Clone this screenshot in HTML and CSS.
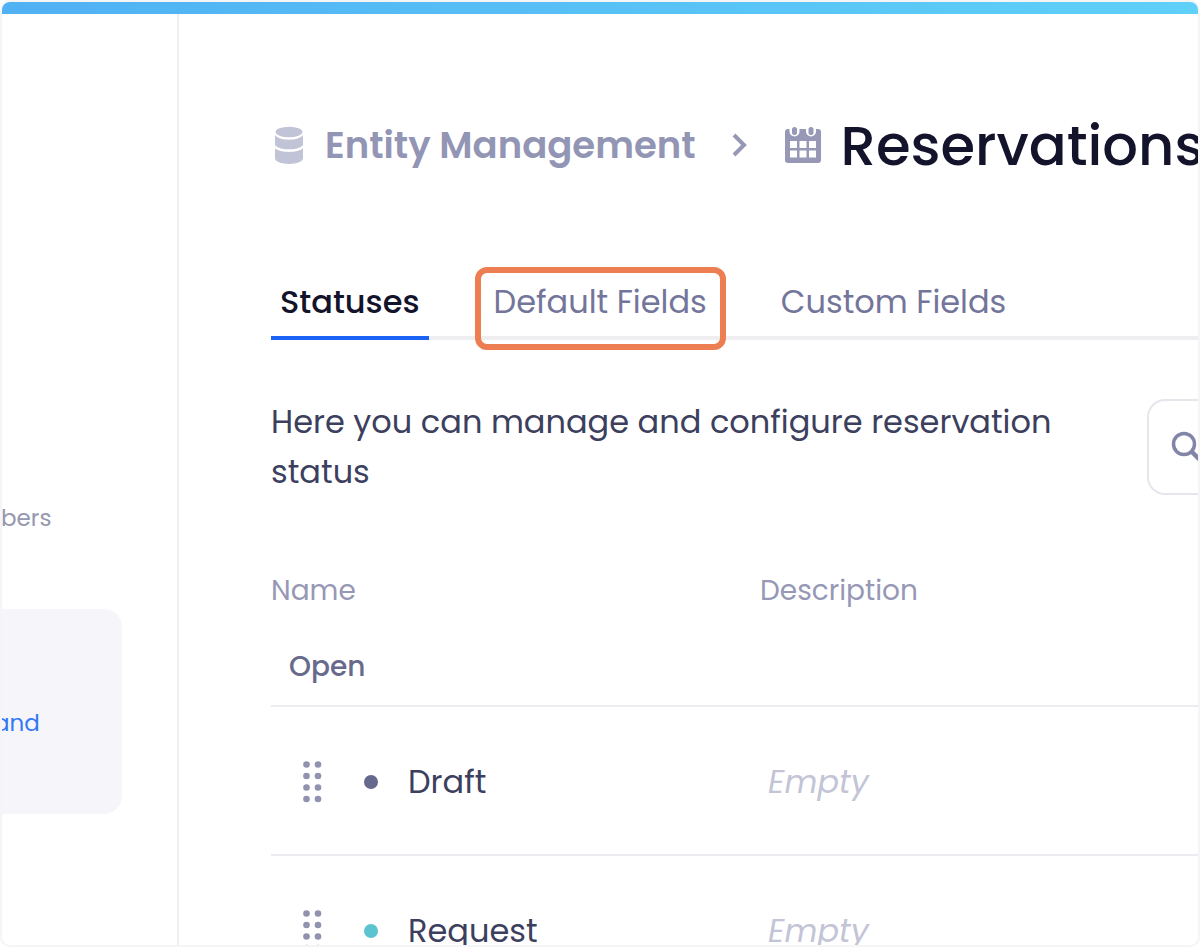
FILE: index.html
```html
<!DOCTYPE html>
<html lang="en">
<head>
  <meta charset="UTF-8">
  <title>Entity Management - Reservations</title>
  <meta name="viewport" content="width=device-width, initial-scale=1.0">
  <link rel="stylesheet" href="styles.css">
</head>
<body>

<div class="frame">
  <div class="top-bar"></div>

  <div class="layout">
    <aside class="sidebar">
      <a href="#" class="side-link">bers</a>
      <div class="side-card">
        <a href="#">and</a>
      </div>
    </aside>

    <main class="content">
      <header class="breadcrumb">
        <svg class="icon-db" width="30" height="38" viewBox="0 0 30 38" fill="#c1c3d6">
          <ellipse cx="15" cy="6" rx="13.5" ry="5.2"/>
          <path d="M1 9c2 3 7.500 4.700 14 4.700s12-1.700 14-4.700v9.300c0 2.900-6.300 5-14 5s-14-2.100-14-5z"/>
          <path d="M1 22c2 2.500 7.500 3.900 14 3.900s12-1.400 14-3.900v10.300c0 3.200-6.300 5.700-14 5.700s-14-2.500-14-5.700z"/>
        </svg>
        <a href="#" class="crumb">Entity Management</a>
        <svg class="icon-chevron" width="16" height="26" viewBox="0 0 16 26" fill="none" stroke="#9698b5" stroke-width="4">
          <path d="M2 3l10 10L2 23"/>
        </svg>
        <svg class="icon-calendar" width="36" height="36" viewBox="0 0 36 36">
          <path fill="#9698b5" d="M3 2h30a3 3 0 0 1 3 3v28a3 3 0 0 1-3 3H3a3 3 0 0 1-3-3V5a3 3 0 0 1 3-3z"/>
          <path stroke="#fff" stroke-width="10" stroke-linecap="round" d="M9.500 0v4.500M26 0v4.500"/>
          <path stroke="#9698b5" stroke-width="5" stroke-linecap="round" d="M9.500 2.500v3M26 2.500v3"/>
          <path fill="#fff" d="M5 14h7v7H5zM14.500 14h7v7h-7zM24 14h7v7h-7zM5 23.500h7v7H5zM14.500 23.500h7v7h-7zM24 23.500h7v7h-7z"/>
        </svg>
        <h1>Reservations</h1>
      </header>

      <nav class="tabs">
        <button type="button" class="tab active">Statuses</button>
        <button type="button" class="tab highlighted">Default Fields</button>
        <button type="button" class="tab">Custom Fields</button>
      </nav>

      <div class="toolbar">
        <p>Here you can manage and configure reservation status</p>
        <button type="button" class="search-btn" aria-label="Search">
          <svg width="32" height="32" viewBox="0 0 32 32" fill="none" stroke="#8385a8" stroke-width="3.500">
            <circle cx="13" cy="13" r="10.500"/>
            <path stroke-width="4.500" d="M20.500 20.500l9 9"/>
          </svg>
        </button>
      </div>

      <table class="statuses">
        <thead>
          <tr>
            <th class="col-name">Name</th>
            <th>Description</th>
          </tr>
        </thead>
        <tbody>
          <tr class="group">
            <td colspan="2">Open</td>
          </tr>
          <tr>
            <td>
              <div class="status">
                <svg class="drag" width="20" height="42" viewBox="0 0 20 42" fill="#9092b0">
                  <circle cx="3.500" cy="3.500" r="3.300"/><circle cx="15" cy="3.500" r="3.300"/>
                  <circle cx="3.500" cy="15" r="3.300"/><circle cx="15" cy="15" r="3.300"/>
                  <circle cx="3.500" cy="26.500" r="3.300"/><circle cx="15" cy="26.500" r="3.300"/>
                  <circle cx="3.500" cy="38" r="3.300"/><circle cx="15" cy="38" r="3.300"/>
                </svg>
                <span class="dot"></span>
                <span>Draft</span>
              </div>
            </td>
            <td class="empty">Empty</td>
          </tr>
          <tr>
            <td>
              <div class="status">
                <svg class="drag" width="20" height="42" viewBox="0 0 20 42" fill="#9092b0">
                  <circle cx="3.500" cy="3.500" r="3.300"/><circle cx="15" cy="3.500" r="3.300"/>
                  <circle cx="3.500" cy="15" r="3.300"/><circle cx="15" cy="15" r="3.300"/>
                  <circle cx="3.500" cy="26.500" r="3.300"/><circle cx="15" cy="26.500" r="3.300"/>
                  <circle cx="3.500" cy="38" r="3.300"/><circle cx="15" cy="38" r="3.300"/>
                </svg>
                <span class="dot teal"></span>
                <span>Request</span>
              </div>
            </td>
            <td class="empty">Empty</td>
          </tr>
        </tbody>
      </table>
    </main>
  </div>
</div>

</body>
</html>
```
FILE: styles.css
```css
* {
  box-sizing: border-box;
}

body {
  margin: 0;
  background: #fff;
  color: #3c3f5e;
  font-family: Poppins, Inter, sans-serif;
  font-size: 32px;
}

a {
  color: inherit;
  text-decoration: none;
}

button {
  font: inherit;
  background: none;
  border: none;
  cursor: pointer;
}

svg {
  flex: none;
}

.frame {
  display: flex;
  flex-direction: column;
  height: 100vh;
  border: 2px solid #f5f5f6;
  border-radius: 10px;
  overflow: hidden;
}

.top-bar {
  flex: none;
  height: 12px;
  background: linear-gradient(90deg, #50b1f3, #5fd0f8);
}

.layout {
  display: flex;
  flex: 1;
  min-height: 0;
}

/* sidebar */
.sidebar {
  flex: none;
  width: 177px;
  padding-top: 484px;
  border-right: 2px solid #efeff2;
  font-size: 23px;
  line-height: 40px;
  overflow: hidden;
}

.side-link {
  display: block;
  margin-left: -1px;
  color: #9698b0;
}

.side-card {
  width: 120px;
  height: 205px;
  margin-top: 71px;
  padding-top: 94px;
  background: #f6f6fa;
  border-radius: 0 18px 18px 0;
  color: #3478f6;
}

.side-card a {
  margin-left: -8px;
}

/* main */
.content {
  flex: 1;
  min-width: 0;
  padding: 91px 0 0 92px;
  overflow: hidden;
}

.breadcrumb {
  display: flex;
  align-items: center;
  height: 80px;
  padding-left: 3px;
  white-space: nowrap;
}

.crumb {
  margin-left: 21px;
  color: #9395b4;
  font-size: 37px;
  font-weight: 600;
}

.icon-chevron {
  margin: 0 37px 0 36px;
}

h1 {
  margin: 0 0 0 20px;
  color: #13132b;
  font-size: 56px;
  font-weight: 500;
}

.tabs {
  display: flex;
  gap: 56px;
  margin-top: 81px;
  border-bottom: 4px solid #efeff2;
}

.tab {
  position: relative;
  height: 74px;
  margin-bottom: -4px;
  padding: 2px 9px 4px;
  color: #73759a;
  white-space: nowrap;
}

.tab.active {
  color: #13132b;
  font-weight: 500;
  border-bottom: 4px solid #1a63f5;
  padding-bottom: 0;
}

.tab.highlighted::after {
  content: "";
  position: absolute;
  inset: 1px -10px -10px;
  border: 6px solid #ec7e52;
  border-radius: 12px;
}

.toolbar {
  display: flex;
  justify-content: space-between;
  margin-top: 57px;
}

.toolbar p {
  max-width: 800px;
  margin: 0;
  line-height: 50px;
}

.search-btn {
  display: flex;
  align-items: center;
  flex: none;
  width: 51px;
  height: 96px;
  margin-top: 2px;
  padding: 0 0 0 22px;
  border: 2px solid #e6e6ec;
  border-right: none;
  border-radius: 18px 0 0 18px;
  overflow: hidden;
}

.statuses {
  width: 100%;
  margin-top: 56px;
  border-collapse: collapse;
  table-layout: fixed;
}

.statuses th {
  height: 75px;
  padding: 0;
  color: #9698b5;
  font-size: 28px;
  font-weight: 400;
  text-align: left;
}

.statuses td {
  height: 149px;
  padding: 2px 0 0;
  border-top: 2px solid #ebebf0;
}

.col-name {
  width: 489px;
}

.statuses .group td {
  height: 78px;
  padding: 0 0 0 18px;
  border-top: none;
  color: #686a8c;
  font-size: 28px;
  font-weight: 500;
}

.status {
  display: flex;
  align-items: center;
  padding-left: 32px;
}

.dot {
  width: 14px;
  height: 14px;
  margin: 0 30px 0 41px;
  background: #66688c;
  border-radius: 50%;
}

.dot.teal {
  background: #5bc4d0;
}

.statuses .empty {
  padding-left: 8px;
  color: #c3c5d6;
  font-style: italic;
}
```
